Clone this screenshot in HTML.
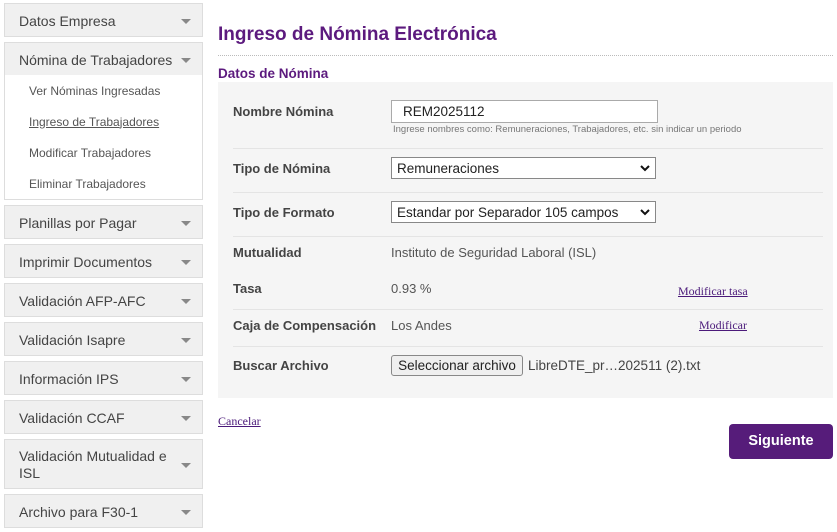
<!DOCTYPE html>
<html><head><meta charset="utf-8"><style>
*{box-sizing:border-box;margin:0;padding:0}
body{width:837px;height:532px;background:#fff;font-family:"Liberation Sans",sans-serif;position:relative;overflow:hidden;color:#444}
.a{position:absolute}
.it{position:absolute;left:4px;width:199px;background:#f0f0f0;border:1px solid #ddd;font-size:14px;color:#444;padding-left:14px;padding-top:2px;display:flex;align-items:center}
.it::after{content:"";position:absolute;right:11px;top:50%;margin-top:-1px;border-left:5px solid transparent;border-right:5px solid transparent;border-top:5px solid #888}
.sub{position:absolute;left:4px;width:199px;height:32px;border:1px solid #ddd;border-top:none;font-size:12px;color:#555;padding-left:24px;display:flex;align-items:center;background:#fff}
.lbl{position:absolute;left:233px;font-weight:bold;font-size:13px;color:#444}
.val{position:absolute;left:391px;font-size:13px;color:#555}
.hr{position:absolute;left:233px;width:590px;height:1px;background:#e4e4e4}
.sel{position:absolute;left:391px;width:265px;height:22px;border:1px solid #888;background:#fff;font-size:13.5px;color:#222;padding-left:5px;line-height:21px}
.sel svg{position:absolute;right:5px;top:6px}
.lk{position:absolute;font-family:"Liberation Serif",serif;font-size:12px;color:#4b1a7a;text-decoration:underline}
</style></head><body>
<div class="it" style="top:3px;height:34px">Datos Empresa</div>
<div class="it" style="top:42px;height:34px">Nómina de Trabajadores</div>
<div class="sub" style="top:75px">Ver Nóminas Ingresadas</div>
<div class="sub" style="top:106px;text-decoration:underline">Ingreso de Trabajadores</div>
<div class="sub" style="top:137px">Modificar Trabajadores</div>
<div class="sub" style="top:168px">Eliminar Trabajadores</div>
<div class="it" style="top:205px;height:34px">Planillas por Pagar</div>
<div class="it" style="top:244px;height:34px">Imprimir Documentos</div>
<div class="it" style="top:283px;height:34px">Validación AFP-AFC</div>
<div class="it" style="top:322px;height:34px">Validación Isapre</div>
<div class="it" style="top:361px;height:34px">Información IPS</div>
<div class="it" style="top:400px;height:34px">Validación CCAF</div>
<div class="it" style="top:439px;height:50px;line-height:17px">Validación Mutualidad e<br>ISL</div>
<div class="it" style="top:494px;height:34px">Archivo para F30-1</div>

<div class="a" style="left:218px;top:24px;font-size:19px;font-weight:bold;color:#5c1a7e">Ingreso de Nómina Electrónica</div>
<div class="a" style="left:218px;top:55px;width:615px;border-top:1px dotted #bbb"></div>
<div class="a" style="left:218px;top:66px;font-size:13.5px;font-weight:bold;color:#5c1a7e">Datos de Nómina</div>
<div class="a" style="left:218px;top:82px;width:615px;height:316px;background:#f5f5f5"></div>

<div class="lbl" style="top:104px">Nombre Nómina</div>
<div class="a" style="left:391px;top:100px;width:267px;height:23px;border:1px solid #aaa;background:#fff;font-size:13.5px;color:#222;padding-left:11px;line-height:21px">REM2025112</div>
<div class="a" style="left:393px;top:124px;font-size:9.5px;color:#777">Ingrese nombres como: Remuneraciones, Trabajadores, etc. sin indicar un periodo</div>
<div class="hr" style="top:148px"></div>
<div class="lbl" style="top:161px">Tipo de Nómina</div>
<div class="sel" style="top:157px">Remuneraciones<svg width="10" height="8" viewBox="0 0 10 8"><path d="M1 2l4 4 4-4" stroke="#111" stroke-width="2" fill="none"/></svg></div>
<div class="hr" style="top:192px"></div>
<div class="lbl" style="top:205px">Tipo de Formato</div>
<div class="sel" style="top:201px">Estandar por Separador 105 campos<svg width="10" height="8" viewBox="0 0 10 8"><path d="M1 2l4 4 4-4" stroke="#111" stroke-width="2" fill="none"/></svg></div>
<div class="hr" style="top:236px"></div>
<div class="lbl" style="top:245px">Mutualidad</div>
<div class="val" style="top:245px">Instituto de Seguridad Laboral (ISL)</div>
<div class="lbl" style="top:281px">Tasa</div>
<div class="val" style="top:281px">0.93 %</div>
<div class="lk" style="left:678px;top:284px">Modificar tasa</div>
<div class="hr" style="top:309px"></div>
<div class="lbl" style="top:318px">Caja de Compensación</div>
<div class="val" style="top:318px">Los Andes</div>
<div class="lk" style="left:699px;top:318px">Modificar</div>
<div class="hr" style="top:346px"></div>
<div class="lbl" style="top:358px">Buscar Archivo</div>
<div class="a" style="left:391px;top:355px;width:132px;height:21px;border:1px solid #888;border-radius:3px;background:#efefef;font-size:13.5px;color:#222;text-align:center;line-height:19px">Seleccionar archivo</div>
<div class="a" style="left:528px;top:358px;font-size:13.5px;color:#444">LibreDTE_pr…202511 (2).txt</div>

<div class="lk" style="left:218px;top:414px">Cancelar</div>
<div class="a" style="left:729px;top:424px;width:104px;height:35px;background:#561c7a;border-radius:4px;color:#fff;font-weight:bold;font-size:14.5px;text-align:center;line-height:35px">Siguiente</div>
</body></html>
